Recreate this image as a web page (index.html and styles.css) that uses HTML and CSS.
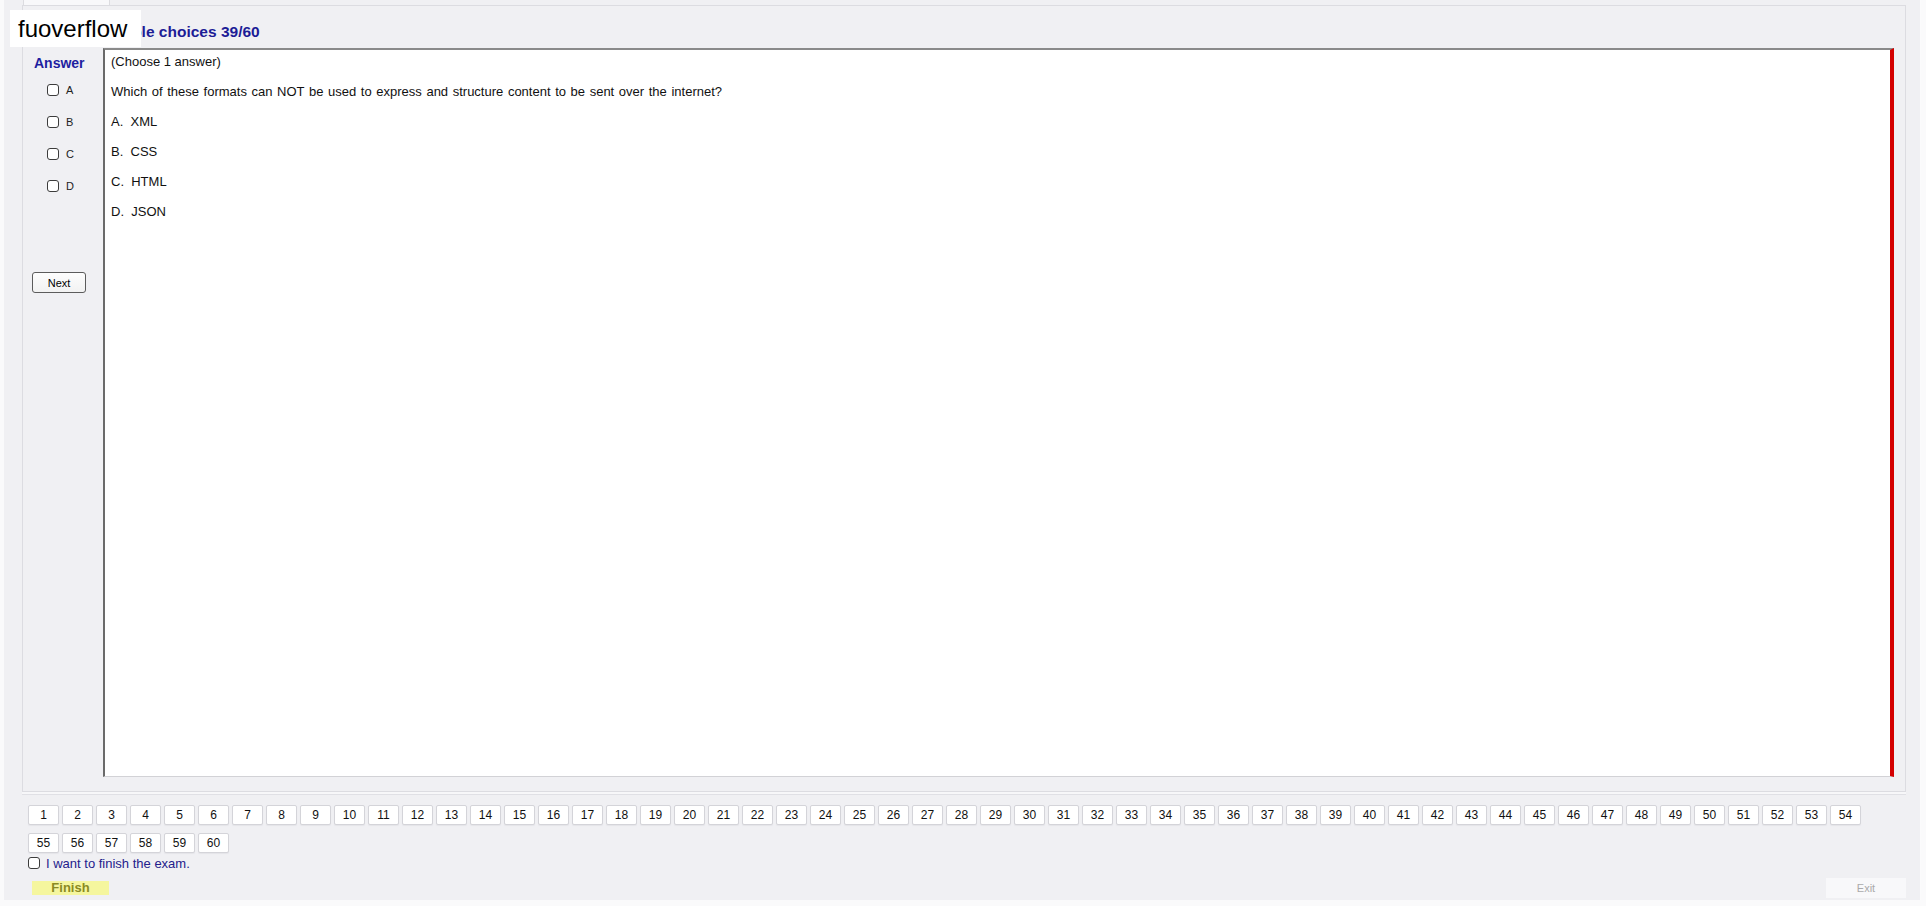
FILE: index.html
```html
<!DOCTYPE html>
<html lang="en">
<head>
    <meta charset="UTF-8">
    <meta name="viewport" content="width=device-width, initial-scale=1.0">
    <title>Exam</title>
    <link rel="stylesheet" href="styles.css">
</head>
<body>
    <div class="window">
        <div class="brand">fuoverflow</div>
        <div class="tabs">
            <div class="tab"></div>
        </div>
        <div class="tabpage">
            <div class="title">Multiple choices 39/60</div>
            <div class="main">
                <div class="answers">
                    <div class="answer-label">Answer</div>
                    <label class="opt"><input type="checkbox"> A</label>
                    <label class="opt"><input type="checkbox"> B</label>
                    <label class="opt"><input type="checkbox"> C</label>
                    <label class="opt"><input type="checkbox"> D</label>
                    <button class="next-btn">Next</button>
                </div>
                <div class="question">
                    <p>(Choose 1 answer)</p>
                    <p class="stem">Which of these formats can NOT be used to express and structure content to be sent over the internet?</p>
                    <p>A.&nbsp; XML</p>
                    <p>B.&nbsp; CSS</p>
                    <p>C.&nbsp; HTML</p>
                    <p>D.&nbsp; JSON</p>
                </div>
            </div>
        </div>
        <div class="qnav">
            <button>1</button><button>2</button><button>3</button><button>4</button><button>5</button>
            <button>6</button><button>7</button><button>8</button><button>9</button><button>10</button>
            <button>11</button><button>12</button><button>13</button><button>14</button><button>15</button>
            <button>16</button><button>17</button><button>18</button><button>19</button><button>20</button>
            <button>21</button><button>22</button><button>23</button><button>24</button><button>25</button>
            <button>26</button><button>27</button><button>28</button><button>29</button><button>30</button>
            <button>31</button><button>32</button><button>33</button><button>34</button><button>35</button>
            <button>36</button><button>37</button><button>38</button><button>39</button><button>40</button>
            <button>41</button><button>42</button><button>43</button><button>44</button><button>45</button>
            <button>46</button><button>47</button><button>48</button><button>49</button><button>50</button>
            <button>51</button><button>52</button><button>53</button><button>54</button><button>55</button>
            <button>56</button><button>57</button><button>58</button><button>59</button><button>60</button>
        </div>
        <label class="finish-check"><input type="checkbox"> I want to finish the exam.</label>
        <div class="footer">
            <div class="finish">Finish</div>
            <div class="exit">Exit</div>
        </div>
    </div>
</body>
</html>
```

FILE: styles.css
```css
* {
    margin: 0;
    padding: 0;
    box-sizing: border-box;
}
body {
    font-family: "Liberation Sans", Arial, sans-serif;
    background: #fafafb;
    color: #000;
    width: 1926px;
    height: 906px;
    overflow: hidden;
}
.window {
    position: relative;
    margin-left: 4px;
    width: 1917px;
    height: 900px;
    background: #f0f0f3;
    border-right: 1px solid #fbfbfc;
}
.brand {
    position: absolute;
    left: 6px;
    top: 10px;
    width: 131px;
    height: 37px;
    background: #fff;
    font-size: 24px;
    line-height: 37px;
    padding-left: 8px;
    color: #000;
    z-index: 10;
}
.tabs {
    height: 5px;
    padding-left: 19px;
}
.tab {
    width: 87px;
    height: 5px;
    background: #f8f8fa;
    border-left: 1px solid #dcdce0;
    border-right: 1px solid #dcdce0;
}
.tabpage {
    margin-left: 18px;
    width: 1884px;
    height: 787px;
    border: 1px solid #dcdce1;
    box-shadow: 0 2px 0 #f7f7f9, 0 3px 0 #e0e0e5;
    padding-right: 11px;
}
.title {
    height: 42px;
    padding: 17px 0 0 73px;
    font-size: 15.5px;
    line-height: 18px;
    font-weight: bold;
    color: #1c1c96;
}
.main {
    display: flex;
    height: 729px;
}
.answers {
    width: 80px;
    flex-shrink: 0;
    padding-top: 7px;
}
.answer-label {
    font-size: 14px;
    line-height: 16px;
    font-weight: bold;
    color: #1e1ea0;
    padding-left: 11px;
    margin-bottom: 3px;
}
.opt {
    display: flex;
    align-items: center;
    height: 32px;
    padding-left: 24px;
    font-size: 11px;
    color: #222;
}
input[type="checkbox"] {
    appearance: none;
    width: 12px;
    height: 12px;
    border: 1px solid #3c3c3c;
    border-radius: 3px;
    background: #fff;
    margin-right: 7px;
}
.next-btn {
    display: block;
    margin: 70px 0 0 9px;
    width: 54px;
    height: 21px;
    border: 1px solid #5c5c5c;
    border-radius: 3px;
    background: linear-gradient(#fdfdfd, #f2f2f2);
    font-family: inherit;
    font-size: 11px;
    color: #000;
}
.question {
    flex: 1;
    background: #fff;
    border-top: 2px solid #8a8a8a;
    border-left: 2px solid #6a6a6a;
    border-bottom: 1px solid #d2d2d6;
    border-right: 4px solid #d40000;
    padding: 4px 0 0 6px;
    font-size: 13px;
    color: #111;
}
.question p {
    line-height: 15px;
    margin-bottom: 15px;
}
.question .stem {
    word-spacing: 1px;
}
.qnav {
    display: flex;
    flex-wrap: wrap;
    gap: 8px 3px;
    width: 1864px;
    padding-left: 24px;
    margin-top: 13px;
}
.qnav button {
    width: 31px;
    height: 20px;
    background: #fff;
    border: 1px solid #d4d4d9;
    border-radius: 2px;
    box-shadow: 0 1px 1px #e4e4e8;
    font-family: inherit;
    font-size: 12px;
    color: #111;
}
.finish-check {
    display: flex;
    align-items: center;
    height: 14px;
    margin: 3px 0 0 24px;
    font-size: 13px;
    color: #24208c;
}
.finish-check input[type="checkbox"] {
    margin-right: 6px;
}
.footer {
    display: flex;
    justify-content: space-between;
    align-items: center;
    padding: 8px 14px 0 28px;
}
.finish {
    width: 77px;
    height: 14px;
    background: #f5f69e;
    color: #8a8a24;
    font-size: 13px;
    font-weight: bold;
    line-height: 14px;
    text-align: center;
}
.exit {
    width: 80px;
    height: 20px;
    background: #f8f8fa;
    color: #aaa;
    font-size: 11px;
    line-height: 20px;
    text-align: center;
}
```
